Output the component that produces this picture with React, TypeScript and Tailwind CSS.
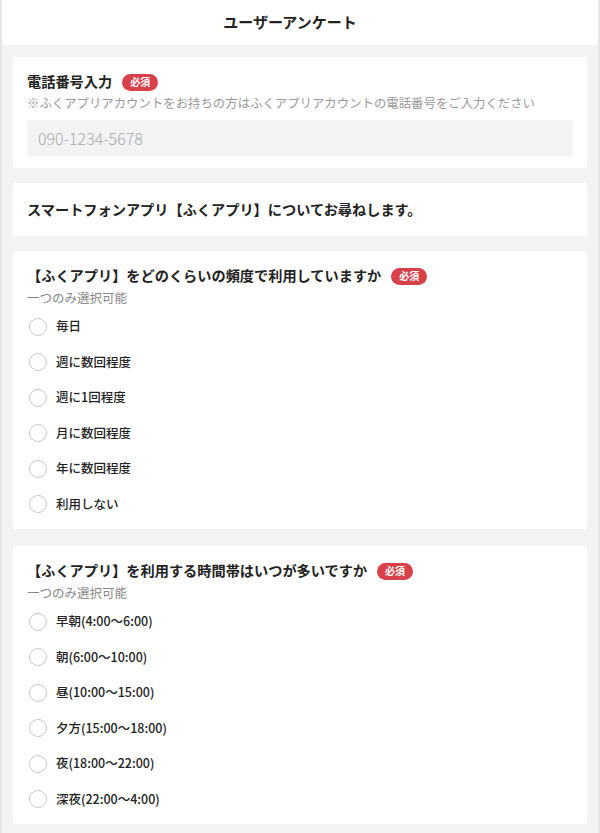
const font = { fontFamily: '"Noto Sans CJK JP", "Noto Sans", sans-serif' }

const frequency = ['毎日', '週に数回程度', '週に1回程度', '月に数回程度', '年に数回程度', '利用しない']
const timeSlots = [
  '早朝(4:00〜6:00)',
  '朝(6:00〜10:00)',
  '昼(10:00〜15:00)',
  '夕方(15:00〜18:00)',
  '夜(18:00〜22:00)',
  '深夜(22:00〜4:00)',
]

function Badge() {
  return (
    <span className="ml-[10px] inline-flex h-[17px] items-center rounded-full bg-[#d9414a] px-[8px] text-[10px] font-bold leading-none text-white">
      必須
    </span>
  )
}

function Question({ title, options, className = '' }: { title: string; options: string[]; className?: string }) {
  return (
    <section className={`rounded-[3px] bg-white px-[14px] pt-[15px] pb-[7px] ${className}`}>
      <div className="flex h-[20px] items-center">
        <h2 className="text-[14.2px] font-bold text-[#222]">{title}</h2>
        <Badge />
      </div>
      <p className="mt-[3px] h-[18px] text-[12.5px] leading-[18px] text-[#888]">一つのみ選択可能</p>
      <ul className="mt-[2px] pl-[2px]">
        {options.map((o) => (
          <li key={o} className="flex h-[35.5px] items-center gap-[9px]">
            <span className="h-[18px] w-[18px] rounded-full border-[1.5px] border-[#c8c8c8] bg-white" />
            <span className="text-[12.5px] font-medium text-[#222]">{o}</span>
          </li>
        ))}
      </ul>
    </section>
  )
}

export default function App() {
  return (
    <div style={font} className="min-h-[833px] border-x-2 border-[#e6e7e9] bg-[#f2f3f5]">
      {/* ヘッダー */}
      <header className="flex h-[45px] items-center justify-center bg-white pr-[20px]">
        <h1 className="text-[15px] font-bold text-[#222]">ユーザーアンケート</h1>
      </header>

      <main className="flex flex-col gap-[15px] px-[11px] pt-[12px] pb-[12px]">
        {/* 電話番号入力 */}
        <section className="rounded-[3px] bg-white px-[14px] pt-[15px] pb-[12px]">
          <div className="flex h-[20px] items-center">
            <h2 className="text-[14.2px] font-bold text-[#222]">電話番号入力</h2>
            <Badge />
          </div>
          <p className="mt-[2px] h-[18px] text-[12.4px] leading-[18px] text-[#999]">
            ※ふくアプリアカウントをお持ちの方はふくアプリアカウントの電話番号をご入力ください
          </p>
          <input
            type="tel"
            placeholder="090-1234-5678"
            className="mt-[8px] h-[36px] w-full rounded-[3px] bg-[#f2f3f5] px-[11px] text-[16px] font-light text-[#333] placeholder:text-[#aaa] focus:outline-none"
          />
        </section>

        <section className="flex h-[53px] items-center rounded-[3px] bg-white px-[14px]">
          <p className="text-[14.2px] font-bold text-[#222]">スマートフォンアプリ【ふくアプリ】についてお尋ねします。</p>
        </section>

        <Question title="【ふくアプリ】をどのくらいの頻度で利用していますか" options={frequency} />
        <Question title="【ふくアプリ】を利用する時間帯はいつが多いですか" options={timeSlots} className="mt-[2px]" />
      </main>
    </div>
  )
}
